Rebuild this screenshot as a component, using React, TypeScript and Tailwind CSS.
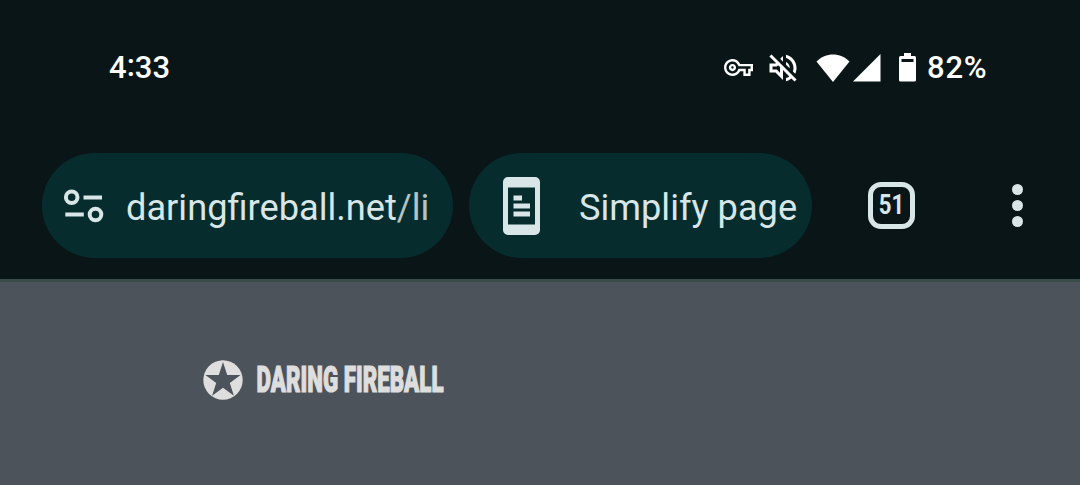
import React from "react";
import { MdOutlineVolumeOff, MdOutlineVpnKey } from "react-icons/md";

function StatusBar() {
  return (
    <div className="flex h-[136px] items-center justify-between pl-[109px] pr-[92px] font-['Roboto',sans-serif] text-[31px] font-medium text-white">
      <span className="-mt-px leading-none">
        4<span className="relative -top-0.5">:</span>33
      </span>

      <div className="-mt-px flex items-center">
        <MdOutlineVpnKey className="h-[29px] w-[29px]" />
        <MdOutlineVolumeOff className="ml-[12px] h-9 w-9" />

        {/* Wifi */}
        <svg className="ml-[15px] h-7 w-[34px]" viewBox="0 0 34 28" fill="currentColor">
          <path d="M17 28L0.500 7.500C5 3 11 0.500 17 0.500S29 3 33.500 7.500z" />
        </svg>

        {/* Signal */}
        <svg className="ml-[3px] h-7 w-7" viewBox="0 0 28 28" fill="currentColor">
          <path d="M0 27.500L27.500 0V27.500z" />
        </svg>

        {/* Battery */}
        <svg className="ml-[18px] h-[29px] w-[17px]" viewBox="0 0 17 29" fill="currentColor">
          <path
            fillRule="evenodd"
            d="M5 0h7v3h3.500A1.500 1.500 0 0117 4.500V27a1.500 1.500 0 01-1.500 1.500h-14A1.500 1.500 0 010 27V4.500A1.500 1.500 0 011.500 3H5zM2.500 6v3h12V6z"
          />
        </svg>
        <span className="ml-[11px] w-[61px] whitespace-nowrap leading-none tracking-[.8px]">82%</span>
      </div>
    </div>
  );
}

function Toolbar() {
  return (
    <div className="flex items-center pl-[42px] pt-[17px] font-['Roboto',sans-serif] text-[36.2px] text-[#d8e6e7]">
      {/* Address */}
      <div className="flex h-[105px] w-[411px] items-center rounded-full bg-[#072c2d] pl-[21px]">
        <svg className="h-[34px] w-[42px]" viewBox="0 0 42 34" fill="none" stroke="currentColor" strokeWidth={4}>
          <circle cx="8.700" cy="8.200" r="5.800" />
          <circle cx="32.500" cy="25.500" r="5.800" />
          <path d="M20.500 8.500h18.500M2.300 25.500h18.500" />
        </svg>
        <span className="ml-[21px] whitespace-nowrap pt-[5px] leading-none">
          daringfireball.net<span className="text-[#b3c4c5]">/li</span>
        </span>
      </div>

      {/* Reader mode */}
      <div className="ml-4 flex h-[105px] w-[343px] items-center rounded-full bg-[#072c2d] pl-[34px]">
        <svg className="h-[58px] w-[37px]" viewBox="0 0 37 58" fill="currentColor">
          <path
            fillRule="evenodd"
            d="M5 0h27a5 5 0 015 5v48a5 5 0 01-5 5H5a5 5 0 01-5-5V5a5 5 0 015-5zM5 10.500v37h27v-37z"
          />
          <path d="M10.500 18.500H19v5h-8.500zM10.500 26.500H27v5H10.500zM10.500 34.500H27v5H10.500z" />
        </svg>
        <span className="ml-[39px] whitespace-nowrap pt-[5px] leading-none">Simplify page</span>
      </div>

      {/* Open tabs */}
      <div className="ml-14 flex h-[47px] w-[47px] items-center justify-center rounded-[13px] border-[5px] border-current">
        <span className="-mt-px scale-x-[.82] text-[27px] font-bold leading-none">51</span>
      </div>

      {/* Menu */}
      <div className="ml-[97px] flex flex-col gap-[5px]">
        <i className="h-[11px] w-[11px] rounded-full bg-current" />
        <i className="h-[11px] w-[11px] rounded-full bg-current" />
        <i className="h-[11px] w-[11px] rounded-full bg-current" />
      </div>
    </div>
  );
}

function Masthead() {
  return (
    <div className="flex items-center pl-[203px] pt-[74px] text-[#dedede]">
      <svg className="h-10 w-10" viewBox="0 0 40 40">
        <circle cx="20" cy="20" r="19.700" fill="currentColor" />
        <path
          fill="#4c535b"
          d="M20 2L24.200 14.900H37.600L26.800 22.900L30.900 35.700L20 27.800L9.100 35.700L13.200 22.900L2.400 14.900H15.800z"
        />
      </svg>
      <svg
        className="ml-[13px] h-12 w-[190px] overflow-visible font-['Roboto',sans-serif] text-[36px] font-black"
        viewBox="0 0 190 48"
        fill="currentColor"
        stroke="currentColor"
        strokeWidth={1.2}
      >
        <text x="0.500" y="36" textLength="187" lengthAdjust="spacingAndGlyphs">
          DARING FIREBALL
        </text>
      </svg>
    </div>
  );
}

export default function App() {
  return (
    <div className="h-[485px] w-[1080px] overflow-hidden bg-[#4c535b]">
      <header className="h-[282px] border-b-[3px] border-[#3a4b4a] bg-[#0a1517]">
        <StatusBar />
        <Toolbar />
      </header>
      <Masthead />
    </div>
  );
}
